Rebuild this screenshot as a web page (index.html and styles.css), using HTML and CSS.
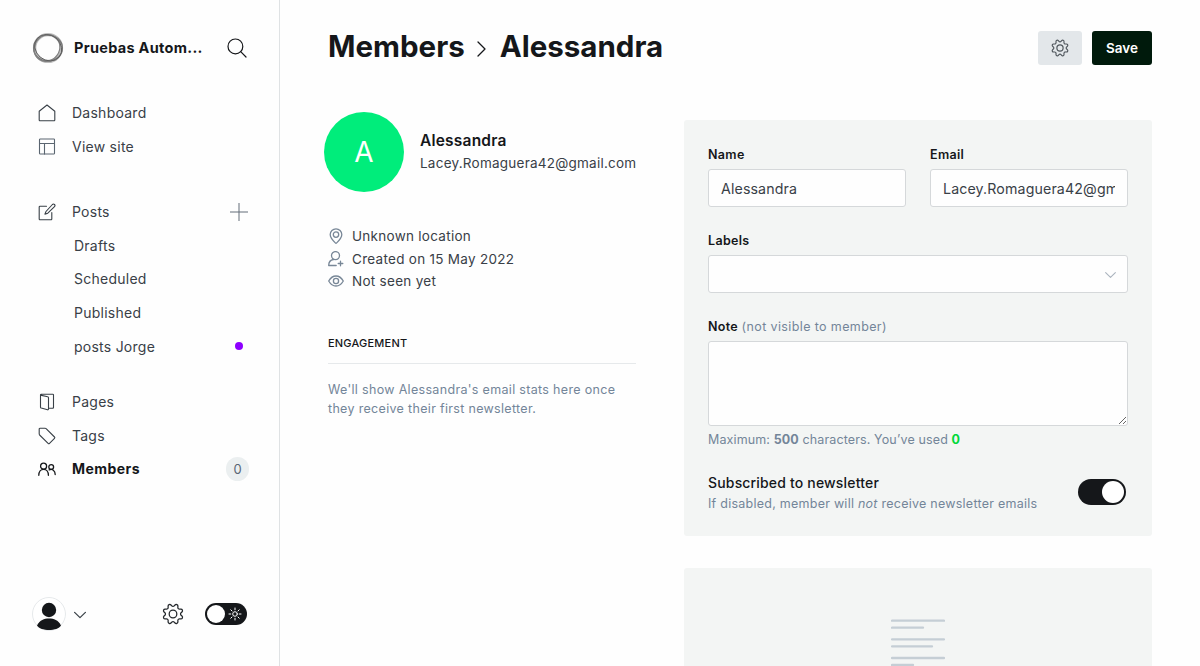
FILE: index.html
```html
<!DOCTYPE html>
<html lang="en">
<head>
<meta charset="utf-8">
<title>Members - Alessandra</title>
<link rel="stylesheet" href="styles.css">
</head>
<body>
<svg class="defs" width="0" height="0">
  <symbol id="cog" viewBox="-1 -1 26 26"><path d="M10.546,2.438a1.957,1.957,0,0,0,2.908,0L14.4,1.4a1.959,1.959,0,0,1,3.41,1.413l-.071,1.4A1.958,1.958,0,0,0,19.79,6.266l1.4-.071A1.959,1.959,0,0,1,22.6,9.6l-1.041.94a1.959,1.959,0,0,0,0,2.909l1.041.94a1.959,1.959,0,0,1-1.413,3.41l-1.4-.071a1.958,1.958,0,0,0-2.056,2.056l.071,1.4A1.959,1.959,0,0,1,14.4,22.6l-.941-1.041a1.959,1.959,0,0,0-2.908,0L9.606,22.6A1.959,1.959,0,0,1,6.2,21.192l.072-1.4a1.958,1.958,0,0,0-2.056-2.056l-1.4.071A1.958,1.958,0,0,1,1.4,14.4l1.041-.94a1.959,1.959,0,0,0,0-2.909L1.4,9.606A1.958,1.958,0,0,1,2.813,6.2l1.4.071A1.958,1.958,0,0,0,6.267,4.211L6.2,2.81A1.959,1.959,0,0,1,9.606,1.4Z"/><circle cx="12" cy="12" r="4.5"/></symbol>
</svg>
<div class="app">
  <nav class="sidebar">
    <header class="brand">
      <svg class="logo" viewBox="0 0 32 32"><circle cx="16" cy="16" r="13.400" stroke="#bdbdbd" stroke-width="3.400"/><ellipse cx="16" cy="16" rx="14.400" ry="13" stroke="#777" stroke-width="1.200"/><ellipse cx="15.200" cy="16.600" rx="12.400" ry="13.800" stroke="#808080" stroke-width="1.200" transform="rotate(35 16 16)"/><ellipse cx="16.400" cy="16" rx="12.400" ry="14.400" stroke="#5c5c5c" stroke-width=".9" transform="rotate(-50 16 16)"/></svg>
      <span class="site">Pruebas Autom...</span>
      <svg class="search" viewBox="0 0 20 20"><circle cx="8.4" cy="8.4" r="7.4"/><path d="M13.7 13.7L19 19"/></svg>
    </header>
    <ul class="menu">
      <li><svg class="ico" viewBox="0 0 18 18"><path d="M1.2 7.2L9 1l7.800 6.200V16a.8.8 0 0 1-.8.8H2a.8.8 0 0 1-.8-.8z"/></svg>Dashboard</li>
      <li><svg class="ico soft" viewBox="0 0 18 18"><rect x="1.500" y="1" width="15" height="15" rx=".8"/><path d="M1.500 5.500h15M6.500 5.500v10.500"/></svg>View site</li>
    </ul>
    <ul class="menu posts">
      <li><svg class="ico" viewBox="0 0 18 18"><path d="M8.500 3.200H2A.8.8 0 0 0 1.200 4v12a.8.8 0 0 0 .8.800h11a.8.8 0 0 0 .8-.8V9.500"/><path d="M16.500 1.500a1.500 1.500 0 0 0-2.100 0L8 8.500 6.900 11.100 9.800 10.200 16.500 3.600a1.500 1.500 0 0 0 0-2.100z"/></svg>Posts<svg class="plus" viewBox="0 0 18 18"><path d="M9 .3v17.400M.3 9h17.400"/></svg></li>
      <li class="sub">Drafts</li>
      <li class="sub">Scheduled</li>
      <li class="sub">Published</li>
      <li class="sub">posts Jorge<i class="dot"></i></li>
    </ul>
    <ul class="menu">
      <li><svg class="ico page" viewBox="0 0 18 18"><path d="M2.500 2.100L9.700 3.800a1 1 0 0 1 .8 1v11.300a.7.7 0 0 1-.9.700L3.200 15a1 1 0 0 1-.7-.9V1.900a.7.7 0 0 1 .7-.7H14.800a.7.7 0 0 1 .7.7v12.500a1 1 0 0 1-.7.900H10.500"/></svg>Pages</li>
      <li><svg class="ico" viewBox="0 0 18 18"><path d="M1.200 2.100a.9.900 0 0 1 .9-.9H7a1.500 1.500 0 0 1 1.100.4l8.400 8.400a1 1 0 0 1 0 1.400l-5 5a1 1 0 0 1-1.400 0L1.600 8a1.500 1.500 0 0 1-.4-1.100z"/></svg>Tags</li>
      <li class="active"><svg class="ico" viewBox="0 0 18 18"><circle cx="5.600" cy="6.200" r="3"/><circle cx="13.200" cy="7" r="2.400"/><path d="M.8 15.300c0-3.500 2-6 4.800-6s4.800 2.500 4.800 6M11.200 9.900c3-1.400 6 .6 6 4.600"/></svg>Members<span class="count">0</span></li>
    </ul>
    <footer class="user">
      <svg class="face" viewBox="0 0 34 34"><circle cx="17" cy="17" r="16.500" fill="#fff" stroke="#e6e9eb"/><circle cx="17" cy="13" r="7.200" fill="#15171a"/><path d="M5 28.500C8 23 12 21.500 17 21.500s9 1.500 12 7C25.500 34.500 8.500 34.500 5 28.500z" fill="#15171a"/></svg>
      <svg class="caret" viewBox="0 0 12 8"><path d="M.6 1.300L6 6.700l5.400-5.400"/></svg>
      <svg class="gear"><use href="#cog"/></svg>
      <span class="theme"><i></i><svg viewBox="0 0 14 14"><circle cx="7" cy="7" r="2.300"/><path d="M7 1v1.800M7 11.200V13M1 7h1.800M11.200 7H13M2.800 2.800l1.200 1.200M10 10l1.200 1.200M2.800 11.200L4 10M10 4l1.200-1.200"/></svg></span>
    </footer>
  </nav>
  <main class="content">
    <header class="top">
      <h1>Members<svg viewBox="0 0 10 16"><path d="M1 1l7 7-7 7"/></svg>Alessandra</h1>
      <button class="btn grey"><svg><use href="#cog"/></svg></button>
      <button class="btn save">Save</button>
    </header>
    <div class="columns">
      <section class="profile">
        <div class="who"><div class="avatar">A</div><div class="ident"><h3>Alessandra</h3><p>Lacey.Romaguera42@gmail.com</p></div></div>
        <ul class="facts">
          <li><svg viewBox="0 0 16 16"><path d="M8 .8a5.800 5.800 0 0 1 5.800 5.800c0 3-3.300 6.600-5.100 8.300a1 1 0 0 1-1.400 0C5.500 13.200 2.200 9.600 2.200 6.600A5.800 5.800 0 0 1 8 .8z"/><circle cx="8" cy="6.600" r="2.700"/></svg>Unknown location</li>
          <li><svg viewBox="0 0 16 16"><circle cx="7.500" cy="4.600" r="4"/><path d="M5.500 8.500C2.300 9 .7 11 .7 14.500h7.500M12.500 10.200v4.600M10.200 12.500h4.600"/></svg>Created on 15 May 2022</li>
          <li><svg viewBox="0 0 16 16"><path d="M.7 8C2.300 5.200 5 3 8 3s5.700 2.200 7.300 5C13.700 10.800 11 13 8 13S2.300 10.800.7 8z"/><circle cx="8" cy="8" r="2.600"/></svg>Not seen yet</li>
        </ul>
        <h4>Engagement</h4>
        <p class="empty">We'll show Alessandra's email stats here once they receive their first newsletter.</p>
      </section>
      <section class="panels">
        <form class="panel">
          <div class="pair">
            <label>Name<input value="Alessandra"></label>
            <label>Email<input value="Lacey.Romaguera42@gmail.com"></label>
          </div>
          <label>Labels<span class="select"><svg viewBox="0 0 12 8"><path d="M.7 1.400L6 6.700l5.300-5.300"/></svg></span></label>
          <label>Note <em>(not visible to member)</em><textarea></textarea></label>
          <p class="hint limit">Maximum: <b>500</b> characters. You’ve used <b class="used">0</b></p>
          <div class="subscribe">
            <div><h5>Subscribed to newsletter</h5><p class="hint">If disabled, member will <i>not</i> receive newsletter emails</p></div>
            <span class="switch"></span>
          </div>
        </form>
        <div class="panel feed"><svg viewBox="0 0 54 64"><path d="M1 1.700h52M1 8.700h31M1 20.400h52M1 27.400h40M1 39h52M1 46h21"/></svg></div>
      </section>
    </div>
  </main>
</div>
</body>
</html>
```
FILE: styles.css
```css
* { box-sizing: border-box; }
body { margin: 0; background: #fefefe; color: #15171a; font: 400 14px/20px Inter, sans-serif; overflow: hidden; }
h1, h3, h4, h5, p, ul { margin: 0; padding: 0; }
ul { list-style: none; }
svg { fill: none; stroke: currentColor; flex: none; stroke-linecap: round; stroke-linejoin: round; }
.defs { position: absolute; }
.app { display: grid; grid-template-columns: 280px 1fr; height: 666px; }

.sidebar { border-right: 1px solid #dfe2e4; display: flex; flex-direction: column; padding: 32px 31px 35px 32px; overflow: hidden; }
.brand { display: flex; align-items: center; height: 32px; margin-bottom: 32px; }
.logo { width: 32px; height: 32px; }
.site { margin-left: 10px; flex: 1; font-size: 14.500px; letter-spacing: .3px; font-weight: 700; white-space: nowrap; }
.search { width: 20px; height: 20px; stroke-width: 1.2; margin-right: 1px; }
.menu { margin-bottom: 31.600px; color: #394047; font-size: 14px; letter-spacing: .25px; }
.menu.posts { margin-bottom: 21.600px; }
.menu li { display: flex; align-items: center; height: 33.700px; padding-left: 6px; }
.menu li.sub { padding-left: 42px; }
.menu li.active { color: #15171a; font-weight: 700; letter-spacing: .45px; }
.ico { width: 18px; height: 18px; margin-right: 16px; stroke-width: 1.100; }
.active .ico { stroke-width: 1.300; }
.soft { color: #5a6570; }
.plus { width: 18px; height: 18px; margin-left: auto; color: #626d79; }
.dot { width: 8px; height: 8px; border-radius: 50%; background: #8e00ff; margin: 0 5px 2px auto; }
.count { margin-left: auto; margin-right: -1px; width: 23px; height: 24px; line-height: 24px; border-radius: 12px; background: #ebeff0; color: #596675; font-size: 13px; font-weight: 400; text-align: center; letter-spacing: 0; }
.user { display: flex; align-items: center; height: 34px; margin-top: auto; color: #394047; }
.face { width: 34px; height: 34px; stroke: none; }
.caret { width: 12px; height: 8px; margin: 1px 0 0 8px; stroke-width: 1.200; }
.gear { width: 22px; height: 22px; margin: 0 -1px 0 auto; stroke-width: 1.500; color: #24282c; }
.theme { width: 42px; height: 22px; margin: 0 1px 0 22px; padding: 0 5px 0 2px; border-radius: 11px; background: #15171a; display: flex; align-items: center; justify-content: space-between; color: #fff; }
.theme i { width: 18px; height: 18px; border-radius: 50%; background: #fff; }
.theme svg { width: 14px; height: 14px; stroke-width: 1; }

.content { padding: 0 48px; overflow: hidden; }
.top { display: flex; align-items: center; height: 96px; }
h1 { flex: 1; display: flex; align-items: center; font-size: 29.500px; font-weight: 700; line-height: 36px; padding-bottom: 4px; }
h1 svg { width: 10px; height: 16px; margin: 5px 13px 0 12px; stroke-width: 1.300; }
.btn { height: 34px; border: 0; border-radius: 3px; font: 600 13.500px/34px Inter, sans-serif; padding: 0; display: flex; align-items: center; justify-content: center; }
.grey { width: 44px; background: #e3e7ea; color: #50575d; margin-right: 10px; }
.grey svg { width: 18px; height: 18px; stroke-width: 1.700; }
.save { width: 60px; background: #001a0c; color: #fff; }

.columns { display: grid; grid-template-columns: 308px 468px; column-gap: 48px; }
.profile { padding-top: 16px; }
.who { display: flex; align-items: center; gap: 16px; margin-left: -4px; }
.avatar { flex: none; width: 80px; height: 80px; border-radius: 50%; background: #00ed7b; color: #fff; font-size: 28px; line-height: 80px; text-align: center; }
.ident { padding-bottom: 2px; }
h3 { font-size: 15.500px; line-height: 23px; font-weight: 600; letter-spacing: .2px; }
.who p { color: #394047; font-size: 13.500px; line-height: 22px; letter-spacing: .24px; }
.facts { margin-top: 33px; color: #394047; font-size: 13.500px; letter-spacing: .28px; }
.facts li { display: flex; align-items: center; height: 22.600px; }
.facts svg { width: 16px; height: 16px; margin-right: 8px; color: #788797; stroke-width: 1.300; }
h4 { margin-top: 40px; padding-bottom: 10px; border-bottom: 1px solid #e6e9eb; font-size: 11px; line-height: 20px; font-weight: 500; text-transform: uppercase; letter-spacing: .2px; }
.empty { margin-top: 16px; color: #738599; font-size: 12.500px; line-height: 19px; letter-spacing: .32px; }
.panels { display: grid; gap: 32px; padding-top: 24px; align-content: start; }
.panel { background: #f3f5f4; border-radius: 3px; padding: 25px 24px 24px; height: 416px; }
.pair { display: grid; grid-template-columns: 198px 198px; gap: 24px; }
label { display: block; font-size: 12.500px; font-weight: 600; line-height: 20px; height: 86px; letter-spacing: .32px; }
label em { font-style: normal; font-weight: 400; color: #738599; letter-spacing: .38px; }
input, .select, textarea { display: block; width: 100%; height: 38px; margin-top: 4px; border: 1px solid #d5d8da; border-radius: 3px; background: #fefefe; }
input { padding: 0 12px; font: 400 14.200px/20px Inter, sans-serif; letter-spacing: .13px; color: #394047; }
.select { display: flex; align-items: center; justify-content: flex-end; padding-right: 11px; }
.select svg { width: 11px; height: 8px; margin-top: 1px; color: #abb4be; stroke-width: 1.200; }
textarea { height: 85px; resize: vertical; }
.hint { font-size: 12.500px; line-height: 20px; color: #738599; letter-spacing: .25px; }
.limit { margin-top: 27px; letter-spacing: .12px; }
.used { color: #00d93a; }
.subscribe { display: flex; justify-content: space-between; align-items: center; margin-top: 22px; padding-right: 2px; }
h5 { font-size: 14px; font-weight: 500; line-height: 22px; letter-spacing: .17px; }
.switch { width: 48px; height: 26px; margin-bottom: 2px; padding: 2px; border-radius: 13px; background: #15171a; display: flex; justify-content: flex-end; }
.switch::after { content: ""; width: 22px; height: 22px; border-radius: 50%; background: #fff; }
.feed { padding-top: 51px; text-align: center; }
.feed svg { width: 54px; height: 64px; stroke: #c5ced5; stroke-width: 2.300; }
```
